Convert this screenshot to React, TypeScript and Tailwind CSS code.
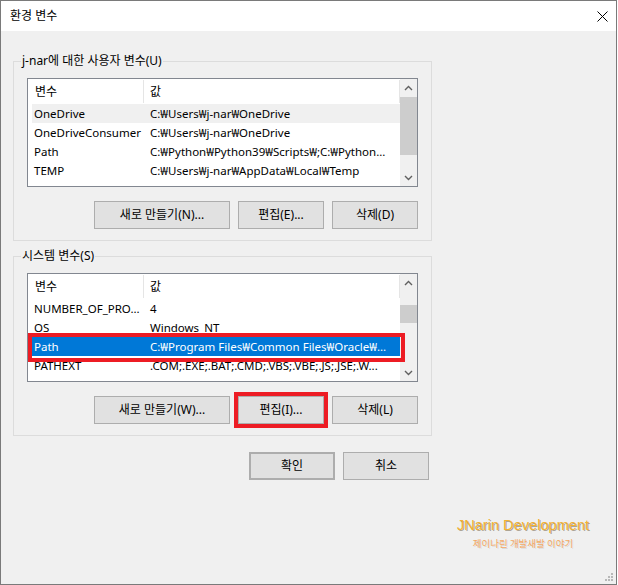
import React from "react";

const ChevUp = () => (
  <svg width="9" height="6" viewBox="0 0 9 6">
    <path d="M1 5L4.5 1.5L8 5" fill="none" stroke="#606060" strokeWidth="1.4" />
  </svg>
);
const ChevDown = () => (
  <svg width="9" height="6" viewBox="0 0 9 6">
    <path d="M1 1L4.5 4.5L8 1" fill="none" stroke="#606060" strokeWidth="1.4" />
  </svg>
);

type Row = { name: string; value: string; hover?: boolean; selected?: boolean };

function ListBox({
  rows,
  thumbClass,
  children,
}: {
  rows: Row[];
  thumbClass: string;
  children?: React.ReactNode;
}) {
  return (
    <div className="relative mt-[9px] flex h-[109px] border border-[#828790] bg-white">
      <div className="flex w-[372px] flex-col overflow-hidden pl-[4px]">
        <div className="flex h-[25px] shrink-0">
          <div className="flex w-[111px] items-center pl-[3px]">변수</div>
          <div className="my-[1px] flex flex-1 items-center border-l border-r border-[#e5e5e5] pl-[6px]">값</div>
        </div>
        {rows.map((r, i) => (
          <div
            key={i}
            className={
              "flex h-[19px] shrink-0 items-center whitespace-nowrap text-[11.5px] " +
              (r.selected ? "bg-[#0078d7] text-white" : r.hover ? "bg-[#f0f0f0]" : "")
            }
          >
            <div className="w-[111px] overflow-hidden pl-[2px]">{r.name}</div>
            <div className="flex-1 overflow-hidden pl-[7px]">{r.value}</div>
          </div>
        ))}
      </div>
      <div className="flex w-[17px] flex-col bg-[#f0f0f0]">
        <div className="flex h-[17px] shrink-0 items-center justify-center">
          <ChevUp />
        </div>
        <div className={"shrink-0 bg-[#cdcdcd] " + thumbClass} />
        <div className="flex-1" />
        <div className="flex h-[17px] shrink-0 items-center justify-center">
          <ChevDown />
        </div>
      </div>
      {children}
    </div>
  );
}

function Btn({
  children,
  className,
}: {
  children: React.ReactNode;
  className: string;
}) {
  return (
    <button
      className={
        "flex h-[28px] items-center justify-center border border-[#adadad] bg-[#e1e1e1] text-[12px] text-black " +
        className
      }
    >
      {children}
    </button>
  );
}

export default function App() {
  const userRows: Row[] = [
    { name: "OneDrive", value: "C:₩Users₩j-nar₩OneDrive", hover: true },
    { name: "OneDriveConsumer", value: "C:₩Users₩j-nar₩OneDrive" },
    { name: "Path", value: "C:₩Python₩Python39₩Scripts₩;C:₩Python..." },
    { name: "TEMP", value: "C:₩Users₩j-nar₩AppData₩Local₩Temp" },
  ];
  const sysRows: Row[] = [
    { name: "NUMBER_OF_PRO...", value: "4" },
    { name: "OS", value: "Windows_NT" },
    { name: "Path", value: "C:₩Program Files₩Common Files₩Oracle₩...", selected: true },
    { name: "PATHEXT", value: ".COM;.EXE;.BAT;.CMD;.VBS;.VBE;.JS;.JSE;.W..." },
  ];

  return (
    <div className="relative flex h-[585px] w-[617px] flex-col border border-[#7a7a7a] bg-[#f0f0f0] font-['Noto_Sans','Noto_Sans_CJK_KR',sans-serif] text-[12px] text-black">
      {/* title bar */}
      <div className="flex h-[30px] shrink-0 items-center justify-between bg-white pl-[9px] pr-[8px]">
        <span className="text-[12px]">환경 변수</span>
        <svg width="11" height="11" viewBox="0 0 11 11">
          <path d="M0.5 0.5L10.5 10.5M10.5 0.5L0.5 10.5" stroke="#000" strokeWidth="1" />
        </svg>
      </div>

      {/* user variables */}
      <fieldset className="ml-[12px] mt-[22px] w-[417px] border border-[#dcdcdc] px-[13px] pb-[11px]">
        <legend className="-ml-[6px] px-[1px] leading-[16px]">j-nar에 대한 사용자 변수(U)</legend>
        <ListBox rows={userRows} thumbClass="mt-[1px] h-[58px]" />
        <div className="mt-[14px] flex justify-end gap-[8px]">
          <Btn className="w-[136px]">새로 만들기(N)...</Btn>
          <Btn className="w-[86px]">편집(E)...</Btn>
          <Btn className="w-[86px]">삭제(D)</Btn>
        </div>
      </fieldset>

      {/* system variables */}
      <fieldset className="ml-[12px] mt-[7px] w-[417px] border border-[#dcdcdc] px-[13px] pb-[11px]">
        <legend className="-ml-[6px] px-[1px] leading-[16px]">시스템 변수(S)</legend>
        <ListBox rows={sysRows} thumbClass="mt-[14px] h-[18px]">
          <div className="absolute left-0 top-[59px] h-[29px] w-[377px] border-4 border-[#ed1c24]" />
        </ListBox>
        <div className="mt-[14px] flex justify-end gap-[8px]">
          <Btn className="w-[136px]">새로 만들기(W)...</Btn>
          <Btn className="w-[86px] outline-4 outline-[#ed1c24]">편집(I)...</Btn>
          <Btn className="w-[86px]">삭제(L)</Btn>
        </div>
      </fieldset>

      {/* OK / Cancel */}
      <div className="ml-[12px] mt-[16px] flex w-[417px] justify-end gap-[8px] pr-[1px]">
        <Btn className="w-[86px] border-2 border-[#0078d7]">확인</Btn>
        <Btn className="w-[86px]">취소</Btn>
      </div>

      {/* watermark */}
      <div className="mr-[13px] mt-[37px] flex w-[160px] flex-col items-center self-end">
        <span className="font-['Liberation_Sans',Arial,sans-serif] text-[14.6px] leading-[17px] text-[#f2b233] [text-shadow:1px_1px_0_rgba(90,70,30,0.45)]">
          JNarin Development
        </span>
        <span className="mt-[3px] font-['Noto_Sans_CJK_KR',sans-serif] text-[9.5px] leading-[12px] text-[#f4a863] [text-shadow:1px_1px_0_rgba(0,0,0,0.12)]">
          제이나린 개발새발 이야기
        </span>
      </div>

      {/* resize grip */}
      <svg className="absolute bottom-[2px] right-[2px]" width="9" height="9" viewBox="0 0 9 9">
        <rect x="6" y="0" width="2" height="2" fill="#b8b8b8" />
        <rect x="3" y="3" width="2" height="2" fill="#b8b8b8" />
        <rect x="6" y="3" width="2" height="2" fill="#b8b8b8" />
        <rect x="0" y="6" width="2" height="2" fill="#b8b8b8" />
        <rect x="3" y="6" width="2" height="2" fill="#b8b8b8" />
        <rect x="6" y="6" width="2" height="2" fill="#b8b8b8" />
      </svg>
    </div>
  );
}
